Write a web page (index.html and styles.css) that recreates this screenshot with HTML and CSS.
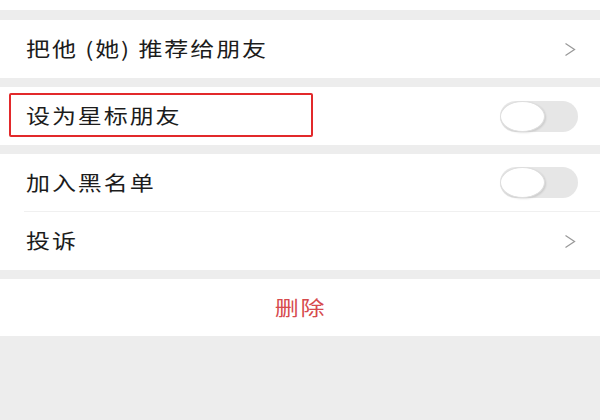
FILE: index.html
```html
<!DOCTYPE html>
<html lang="zh-CN">
<head>
<meta charset="utf-8">
<title>设置</title>
<link rel="stylesheet" href="styles.css">
</head>
<body>
<div class="page">
  <div class="top-strip"></div>
  <div class="group">
    <div class="row">
      <span class="label">把他 (她) 推荐给朋友</span>
      <svg class="chevron" width="12" height="15" viewBox="0 0 12 15"><polyline points="1.5,1.5 10.5,7.5 1.5,13.5" fill="none" stroke="#9a9a9a" stroke-width="1.3"/></svg>
    </div>
  </div>
  <div class="group highlight-wrap">
    <div class="row">
      <span class="label">设为星标朋友</span>
      <span class="switch"><span class="knob"></span></span>
    </div>
    <div class="highlight"></div>
  </div>
  <div class="group">
    <div class="row sep">
      <span class="label">加入黑名单</span>
      <span class="switch"><span class="knob"></span></span>
    </div>
    <div class="row">
      <span class="label">投诉</span>
      <svg class="chevron" width="12" height="15" viewBox="0 0 12 15"><polyline points="1.5,1.5 10.5,7.5 1.5,13.5" fill="none" stroke="#9a9a9a" stroke-width="1.3"/></svg>
    </div>
  </div>
  <div class="group">
    <div class="row delete-row">
      <span class="delete">删除</span>
    </div>
  </div>
</div>
</body>
</html>
```
FILE: styles.css
```css
html, body {
  margin: 0;
  padding: 0;
  background: #ededed;
}
body {
  font-family: "Noto Sans CJK SC", "Noto Sans", sans-serif;
  color: #1c1c1c;
}
.page {
  width: 600px;
  height: 420px;
  display: flex;
  flex-direction: column;
  gap: 10px;
}
.top-strip {
  height: 10px;
  background: #fff;
}
.group {
  background: #fff;
  display: flex;
  flex-direction: column;
}
.group + .group {
  margin-top: -1px;
}
.highlight-wrap {
  position: relative;
}
.row {
  height: 58px;
  display: flex;
  align-items: center;
  justify-content: space-between;
  padding: 0 22px 0 26px;
  box-sizing: border-box;
  position: relative;
}
.row.sep {
  height: 57px;
}
.row.sep::after {
  content: "";
  position: absolute;
  left: 24px;
  right: 0;
  bottom: -1px;
  height: 1px;
  background: #f0f0f0;
}
.row.sep + .row {
  margin-top: 1px;
}
.label {
  font-size: 20px;
  letter-spacing: 1.6px;
  line-height: 1;
  display: inline-block;
  transform: scaleX(1.2);
  transform-origin: left center;
}
.chevron {
  margin-right: 2px;
}
.switch {
  width: 78px;
  height: 31px;
  border-radius: 16px;
  background: #e6e6e6;
  position: relative;
  display: block;
}
.knob {
  position: absolute;
  left: 0;
  top: 0;
  width: 45px;
  height: 31px;
  border-radius: 50%;
  background: #fff;
  box-sizing: border-box;
  border: 1px solid #dedede;
  box-shadow: 1px 1px 2px rgba(0,0,0,0.12);
}
.highlight {
  position: absolute;
  left: 9px;
  top: 6px;
  width: 304px;
  height: 44px;
  border: 2px solid #e2292b;
  border-radius: 2px;
  box-sizing: border-box;
}
.delete-row {
  justify-content: center;
  padding: 0;
  height: 57px;
}
.delete {
  font-size: 20px;
  letter-spacing: 1.6px;
  margin-right: -1.6px;
  color: #d64a4d;
  line-height: 1;
  display: inline-block;
  transform: scaleX(1.2);
}
```
